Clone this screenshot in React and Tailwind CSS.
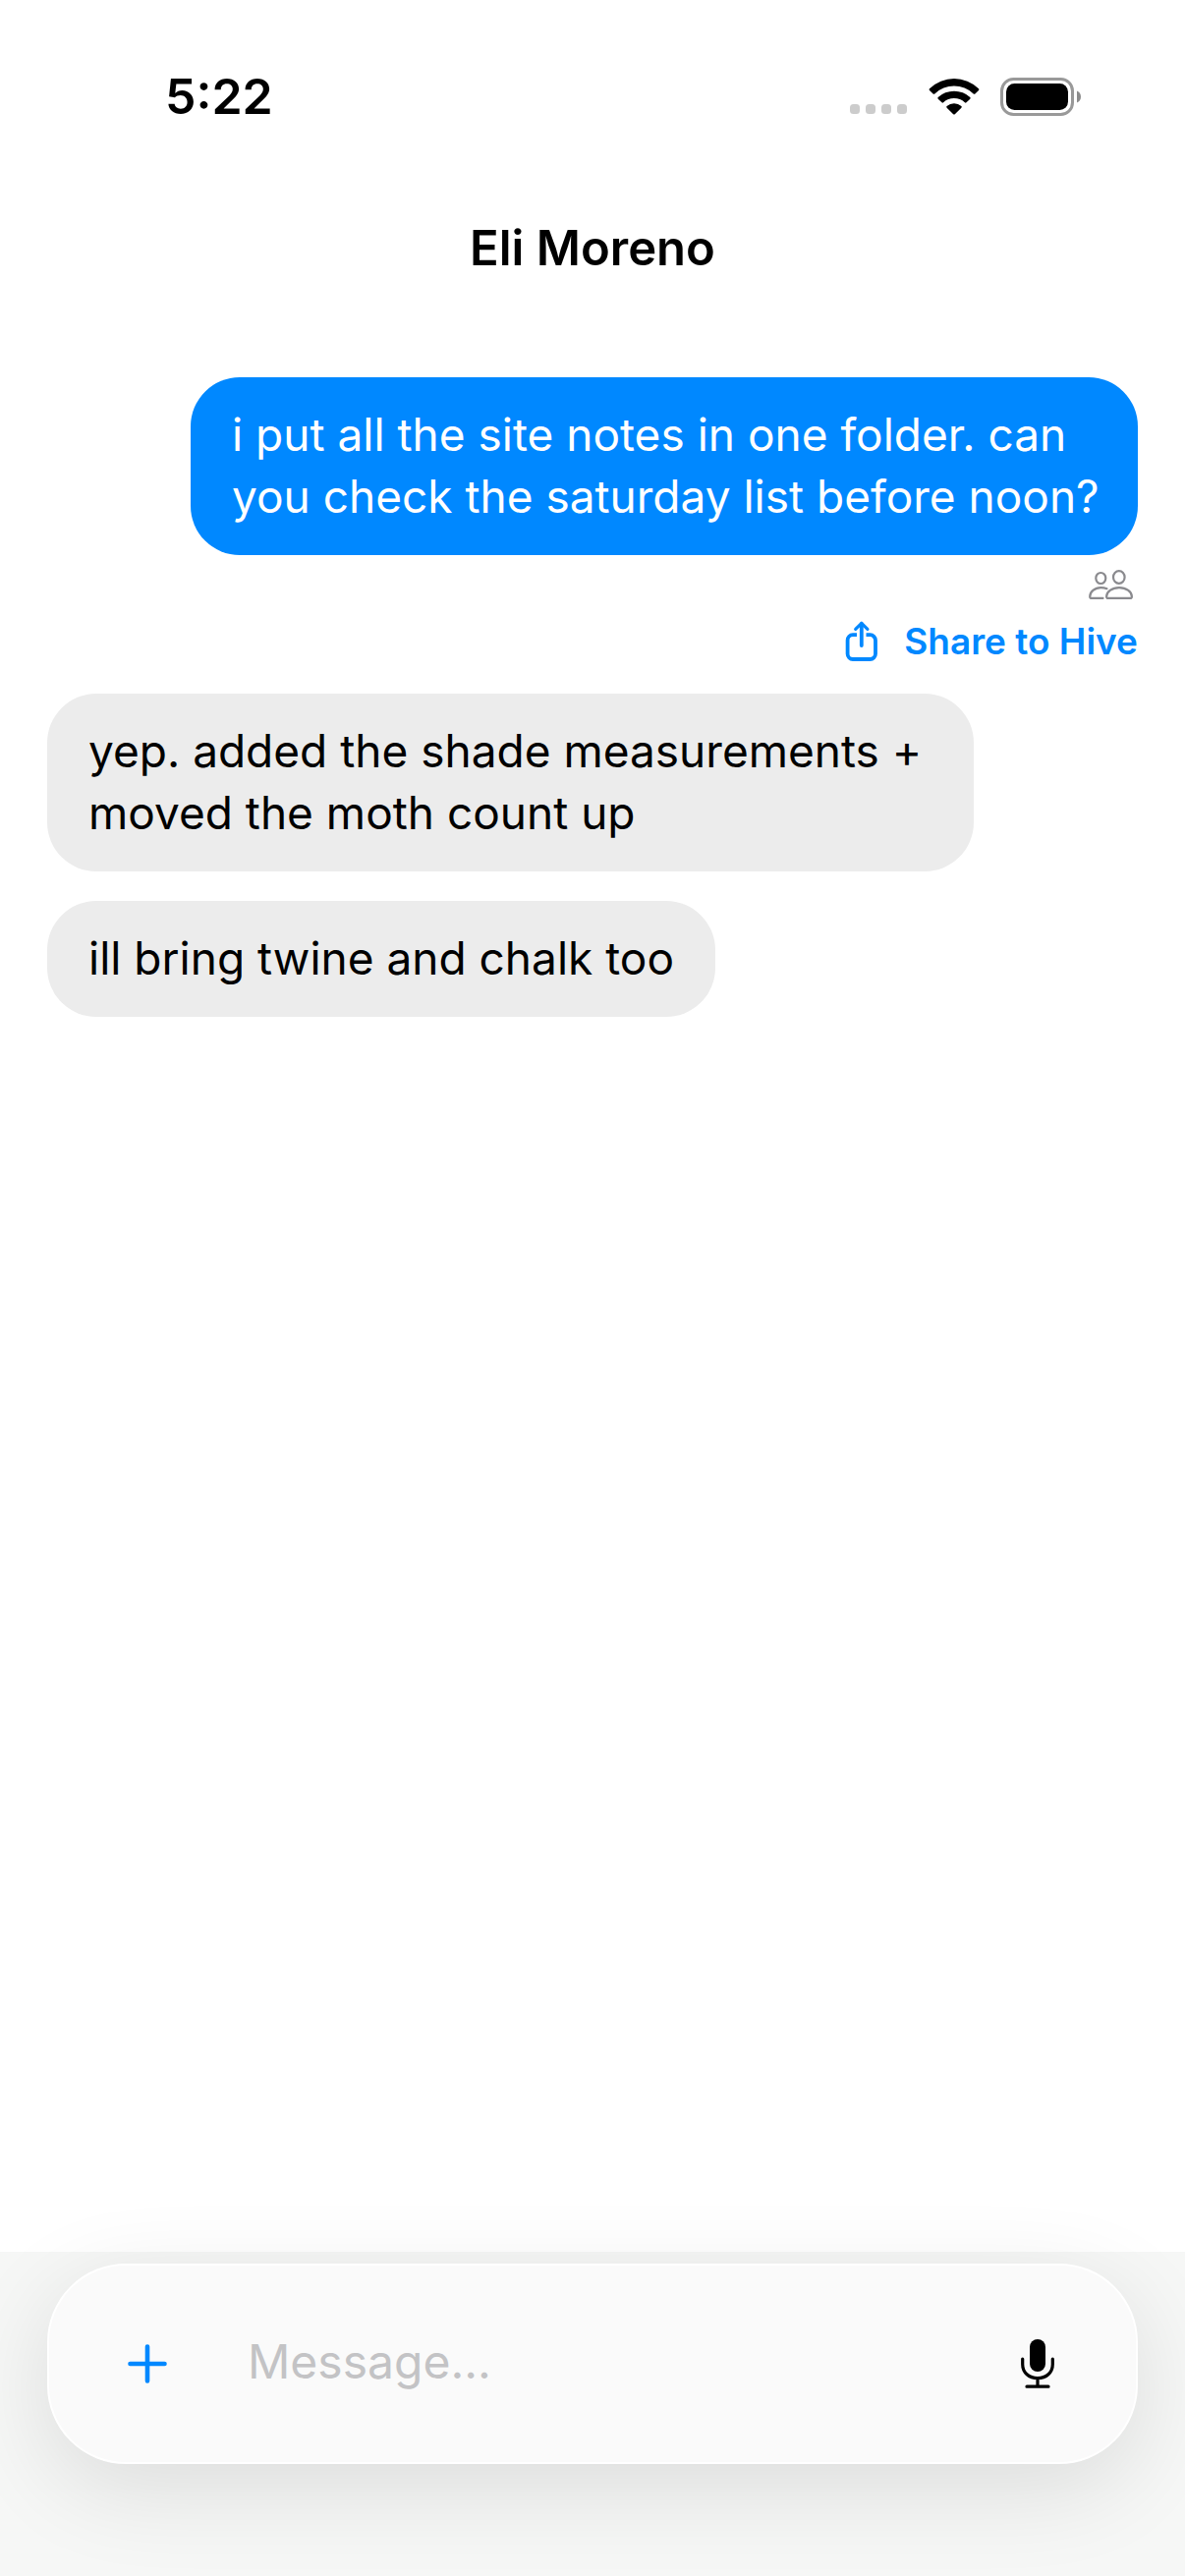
const messages = [
  { id: 1, text: "yep. added the shade measurements + moved the moth count up" },
  { id: 2, text: "ill bring twine and chalk too" },
];

function StatusBar() {
  return (
    <div className="flex items-center justify-between pt-[66px] pr-[106px] pl-[168px]">
      <time className="text-[50px] leading-[64px] font-semibold">5:22</time>
      <div className="flex items-center">
        <svg className="mt-[26px] h-[10px] w-[58px]" viewBox="0 0 58 10" fill="#cccccc" role="img" aria-label="No signal">
          <rect x="0" width="10" height="10" rx="3.5" />
          <rect x="16" width="10" height="10" rx="3.5" />
          <rect x="32" width="10" height="10" rx="3.5" />
          <rect x="48" width="10" height="10" rx="3.5" />
        </svg>
        <svg className="ml-[22px] h-[38px] w-[52px]" viewBox="0 0 52 38" role="img" aria-label="Wi-Fi">
          <path d="M1 11.2Q.2 12 1 12.9L4.6 16.4Q5.4 17.2 6.3 16.4A28.5 28.5 0 0 1 45.7 16.4Q46.6 17.2 47.4 16.4L51 12.9Q51.8 12 51 11.2A36 36 0 0 0 1 11.2Z" />
          <path d="M9.700 20.100Q8.900 20.900 9.700 21.700L13.500 25.300Q14.300 26 15.100 25.300A16.200 16.200 0 0 1 36.900 25.300Q37.700 26 38.500 25.300L42.300 21.700Q43.100 20.900 42.300 20.100A23.800 23.800 0 0 0 9.700 20.100Z" />
          <path d="M18.600 29Q17.800 29.900 18.600 30.700L25.200 37.200Q26 38 26.800 37.200L33.400 30.700Q34.200 29.900 33.400 29A11.500 11.500 0 0 0 18.600 29Z" />
        </svg>
        <svg className="ml-[21px] h-[39px] w-[82px]" viewBox="0 0 82 39" role="img" aria-label="Battery full">
          <rect x="1.500" y="1.500" width="72" height="36" rx="12" fill="none" stroke="#999999" strokeWidth="3" />
          <rect x="6" y="6" width="63" height="27" rx="8.500" />
          <path d="M78 13.500C80.500 14.500 82 16.800 82 19.500S80.500 24.500 78 25.500Z" fill="#8c8c8c" />
        </svg>
      </div>
    </div>
  );
}

function PeopleIcon() {
  return (
    <svg className="h-[30px] w-[46px]" viewBox="0 0 46 30" fill="none" stroke="#8a8a8e" strokeWidth="2.200" strokeLinecap="round" strokeLinejoin="round" role="img" aria-label="Group">
      <ellipse cx="12.300" cy="8.500" rx="5" ry="5.500" />
      <ellipse cx="30.800" cy="7.500" rx="5.800" ry="6.300" />
      <path d="M18.500 19.200C16.700 18.500 14.600 18.100 12.300 18.100C6 18.100 1.200 22.600 1.200 27.200C1.200 28.300 1.700 28.900 2.900 28.900H14.500" />
      <path d="M19.800 28.900C18.600 28.900 18.100 28.300 18.100 27.200C18.100 22.600 23.500 18.100 31 18.100S43.900 22.600 43.900 27.200C43.900 28.300 43.400 28.900 42.200 28.900Z" />
    </svg>
  );
}

function ShareIcon() {
  return (
    <svg className="h-[42px] w-[34px]" viewBox="0 0 34 42" fill="none" stroke="currentColor" strokeWidth="3.800" strokeLinecap="round" strokeLinejoin="round" aria-hidden="true">
      <path strokeLinecap="butt" d="M12 14.200H8A5.500 5.500 0 0 0 2.600 19.700V33.500A5.500 5.500 0 0 0 8 39H25.500A5.500 5.500 0 0 0 31 33.500V19.700A5.500 5.500 0 0 0 25.500 14.200H21.500" />
      <path d="M16.800 25V3" />
      <path strokeWidth="3.200" d="M10.700 8.300L16.800 2.300L22.900 8.300" />
    </svg>
  );
}

export default function App() {
  return (
    <div className="flex min-h-screen flex-col bg-white font-[Inter,sans-serif] text-black">
      <StatusBar />
      <header className="pt-[92px]">
        <h1 className="text-center text-[49px] leading-[62px] font-semibold">Eli Moreno</h1>
      </header>

      <main className="flex flex-1 flex-col px-[48px] pt-[100px]">
        <div className="flex flex-col items-end">
          <p className="max-w-[964px] rounded-[50px] bg-[#0088ff] pt-[27px] pr-[30px] pb-[28px] pl-[42px] text-[46px] leading-[63px] text-white">
            i put all the site notes in one folder. can you check the saturday list before noon?
          </p>
          <div className="flex pt-[15px] pr-[4px]">
            <PeopleIcon />
          </div>
          <button type="button" className="mt-[20px] flex h-[46px] items-center gap-[26px] text-[37px] font-semibold text-[#0088ff]">
            <ShareIcon />
            Share to Hive
          </button>
        </div>

        <div className="mt-[30px] flex flex-col items-start gap-[30px]">
          {messages.map((m) => (
            <p key={m.id} className="max-w-[943px] rounded-[50px] bg-[#ececec] px-[42px] pt-[27px] pb-[28px] text-[46px] leading-[63px]">
              {m.text}
            </p>
          ))}
        </div>
      </main>

      <footer className="bg-[#f6f7f6] px-[48px] pt-[12px] pb-[114px]">
        <form className="flex h-[204px] items-center rounded-[80px] border-2 border-white bg-[#fafafa] pr-[64px] pl-[64px] shadow-[0_24px_96px_rgba(0,0,0,0.11)]">
          <button type="button" aria-label="Add attachment" className="flex size-[72px] items-center justify-center text-[#0088ff]">
            <svg className="size-[40px]" viewBox="0 0 40 40" stroke="currentColor" strokeWidth="4.600" strokeLinecap="round" aria-hidden="true">
              <path d="M20 2.500V37.500M2.500 20H37.500" />
            </svg>
          </button>
          <input type="text" aria-label="Message" placeholder="Message..." className="ml-[66px] min-w-0 flex-1 bg-transparent pb-[4px] text-[48px] leading-[62px] outline-none placeholder:text-[#c3c3c5]" />
          <button type="button" aria-label="Dictate" className="flex size-[72px] items-center justify-center">
            <svg className="h-[50px] w-[34px]" viewBox="0 0 34 50" fill="none" stroke="currentColor" strokeWidth="3.200" strokeLinecap="round" aria-hidden="true">
              <rect x="9" y="0" width="16" height="33" rx="8" fill="currentColor" stroke="none" />
              <path d="M1.700 20V25.500C1.700 34 8.300 39.700 17 39.700S32.300 34 32.300 25.500V20M17 40V48M6 48.200H28" />
            </svg>
          </button>
        </form>
      </footer>
    </div>
  );
}
